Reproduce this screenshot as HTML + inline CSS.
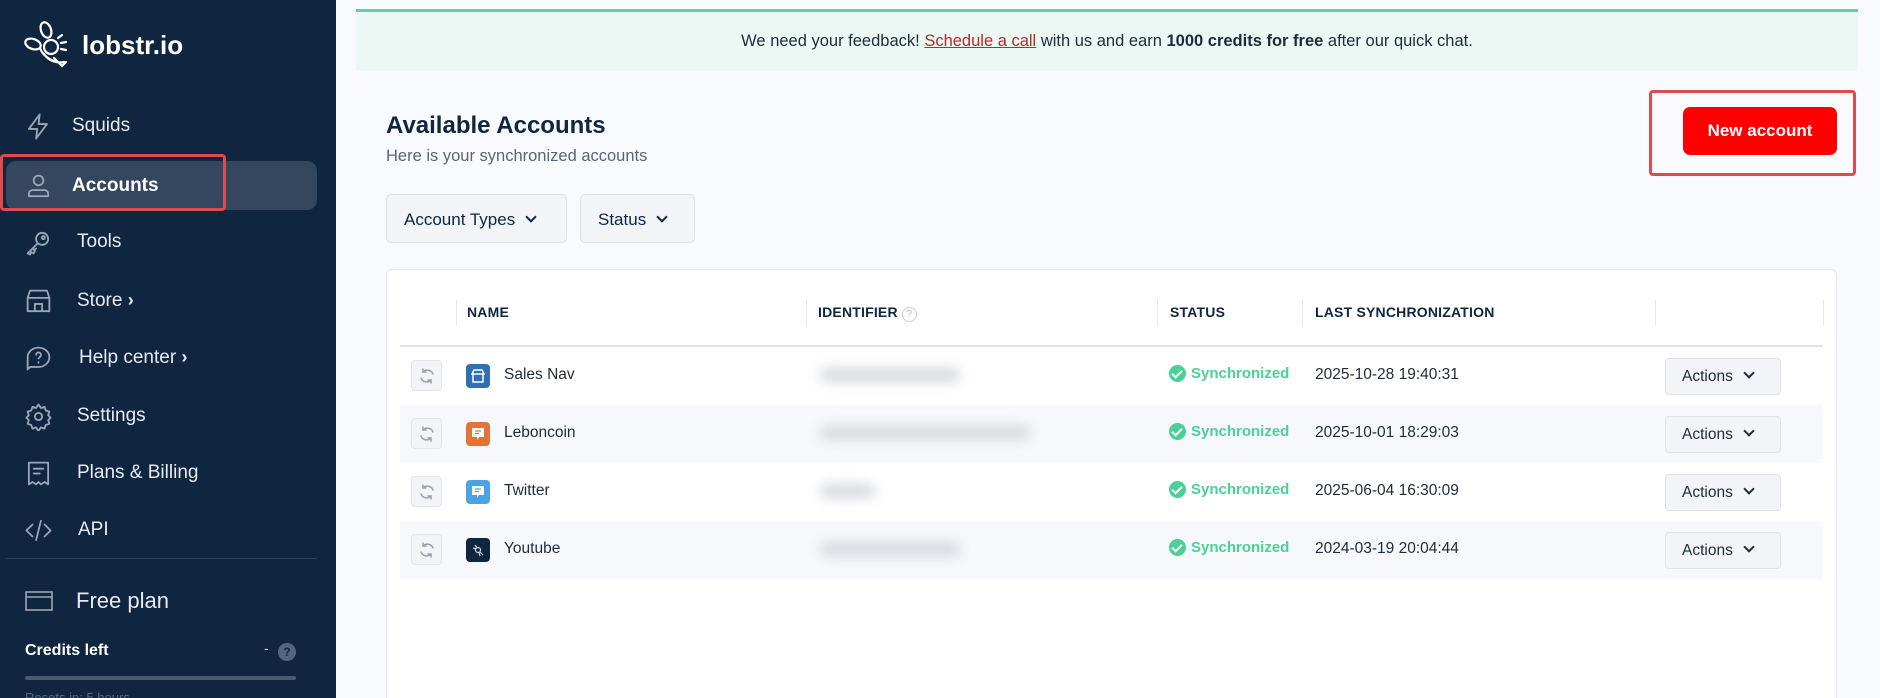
<!DOCTYPE html>
<html style="width:1880px;height:698px;overflow:hidden"><head><meta charset="utf-8"><style>
*{box-sizing:border-box;margin:0;padding:0}
body{width:1880px;height:698px;overflow:hidden;background:#f9fafd;font-family:"Liberation Sans",sans-serif;position:relative;color:#0f2540}
.abs{position:absolute}
#sb{left:0;top:0;width:336px;height:698px;background:#0f2540}
.nav{position:absolute;left:0;height:40px;display:flex;align-items:center;color:#e6ebf2;font-size:19px}
.nav svg{position:absolute;left:24px;width:29px;height:29px;fill:none;stroke:#9aa6b6;stroke-width:1.5;stroke-linecap:round;stroke-linejoin:round}
.nav span{position:absolute;white-space:nowrap}
.th{position:absolute;top:304px;font-size:14px;font-weight:bold;color:#0f2540;letter-spacing:.2px}
.sep{position:absolute;top:300px;width:1px;height:26px;background:#e3e6ea}
.row{position:absolute;left:400px;width:1423px;height:58px}
.sync{position:absolute;left:11px;top:13px;width:31px;height:31px;border:1px solid #e2e5ea;border-radius:4px;background:#f3f4f7}
.sync svg{position:absolute;left:6px;top:6px}
.ic{position:absolute;left:66px;top:17px;width:24px;height:24px;border-radius:4px}
.ic svg{position:absolute;left:5px;top:5px}
.nm{position:absolute;left:104px;top:19px;font-size:15.5px;color:#1e2b3a}
.blur{position:absolute;left:420px;top:21px;height:14px;background:#d5d8de;filter:blur(6px);border-radius:7px}
.st{position:absolute;left:769px;top:18px;font-size:15px;color:#4bd197;font-weight:bold;display:flex;align-items:center;gap:5px}
.st i{display:inline-block;width:17px;height:17px;border-radius:50%;background:#4bd197;position:relative}
.st i:after{content:"";position:absolute;left:5px;top:3px;width:4px;height:8px;border:solid #fff;border-width:0 2px 2px 0;transform:rotate(45deg)}
.dt{position:absolute;left:915px;top:19px;font-size:15.5px;color:#1e2b3a}
.act{position:absolute;left:1265px;top:11px;width:116px;height:37px;border:1px solid #e0e3e8;border-radius:4px;background:#f3f4f7;font-size:15.5px;color:#1e2b3a;padding:9px 0 0 16px}
.chev{display:inline-block;width:8px;height:8px;border:solid #1e2b3a;border-width:0 2px 2px 0;transform:rotate(45deg);margin-left:12px;position:relative;top:-4px}
</style></head><body>
<svg width="0" height="0" style="position:absolute"><defs><g id="sy" fill="none" stroke="#9aa0aa" stroke-width="1.5" stroke-linecap="round"><path d="M15 7a6 6 0 00-10-2M3 11a6 6 0 0010 2"/><path d="M5 2v3h3M13 16v-3h-3"/></g></defs></svg>
<div id="sb" class="abs">
 <svg class="abs" style="left:24px;top:20px" width="48" height="50" viewBox="0 0 48 50" fill="none" stroke="#fff" stroke-width="2.2" stroke-linecap="round"><ellipse cx="22" cy="10" rx="5" ry="8" transform="rotate(-20 22 10)"/><ellipse cx="9" cy="24" rx="8" ry="5" transform="rotate(20 9 24)"/><circle cx="27" cy="27" r="7"/><path d="M34 18l4-3M37 23l5-1M37 29l5 1M20 34c4 6 12 10 20 8M16 28c3 8 10 12 17 14"/><path d="M30 38l8 8 4-4"/></svg>
 <div class="abs" style="left:82px;top:30px;color:#fff;font-size:26px;font-weight:bold">lobstr.io</div>
 <div class="abs" style="left:6px;top:161px;width:311px;height:49px;background:#34475e;border-radius:10px"></div>
 <div class="abs" style="left:0;top:154px;width:226px;height:57px;border:3px solid #e0494d;border-radius:4px"></div>
 <div class="nav" style="top:106px"><svg viewBox="0 0 24 24"><path d="M13 2L4 14h7l-1 8 9-12h-7z"/></svg><span style="left:72px">Squids</span></div>
 <div class="nav" style="top:166px"><svg viewBox="0 0 24 24"><circle cx="12" cy="7" r="4"/><path d="M4 20v-2a3 3 0 013-3h10a3 3 0 013 3v2z"/></svg><span style="left:72px;color:#fff;font-weight:bold">Accounts</span></div>
 <div class="nav" style="top:222px"><svg viewBox="0 0 24 24"><circle cx="15" cy="9" r="5"/><circle cx="16" cy="8" r="1.3"/><path d="M11 13l-8 8 2 1 1-2 2 1 1-2-1-1 2-1"/></svg><span style="left:77px">Tools</span></div>
 <div class="nav" style="top:281px"><svg viewBox="0 0 24 24"><path d="M3 9l2-6h14l2 6v11H3zM3 9h18M9 20v-6h6v6"/></svg><span style="left:77px">Store <b style="font-size:18px">›</b></span></div>
 <div class="nav" style="top:338px"><svg viewBox="0 0 24 24"><path d="M12 3a9 8 0 110 16H5l-2 2V11a9 8 0 019-8z"/><path d="M10 9a2 2 0 114 0c0 2-2 2-2 3M12 15v.5"/></svg><span style="left:79px">Help center <b style="font-size:18px">›</b></span></div>
 <div class="nav" style="top:396px"><svg viewBox="0 0 24 24"><circle cx="12" cy="12" r="3"/><path d="M12 2l2 3 3-1 1 3 3 1-1 3 2 2-2 2 1 3-3 1-1 3-3-1-2 3-2-3-3 1-1-3-3-1 1-3-2-2 2-2-1-3 3-1 1-3 3 1z"/></svg><span style="left:77px">Settings</span></div>
 <div class="nav" style="top:453px"><svg viewBox="0 0 24 24"><path d="M4 3h16v18l-3-2-3 2-2-2-2 2-3-2-3 2zM8 8h8M8 12h5"/></svg><span style="left:77px">Plans &amp; Billing</span></div>
 <div class="nav" style="top:510px"><svg viewBox="0 0 24 24"><path d="M7 7l-5 5 5 5M17 7l5 5-5 5M14 4l-4 16"/></svg><span style="left:78px">API</span></div>
 <div class="abs" style="left:6px;top:558px;width:311px;height:1px;background:#2a3f58"></div>
 <svg class="abs" style="left:25px;top:590px" width="28" height="22" viewBox="0 0 28 22" fill="none" stroke="#9aa6b6" stroke-width="1.6"><rect x="1" y="2" width="26" height="18"/><path d="M1 7h26"/></svg>
 <div class="abs" style="left:76px;top:588px;color:#e6ebf2;font-size:22px">Free plan</div>
 <div class="abs" style="left:25px;top:642px;color:#fff;font-size:16px;font-weight:bold">Credits left</div>
 <div class="abs" style="left:264px;top:640px;color:#ccc;font-size:14px">-</div>
 <div class="abs" style="left:278px;top:643px;width:18px;height:18px;border-radius:50%;background:#53667e;color:#0f2540;font-size:12px;font-weight:bold;text-align:center;line-height:18px">?</div>
 <div class="abs" style="left:25px;top:676px;width:271px;height:4px;border-radius:2px;background:#4a5b70"></div>
 <div class="abs" style="left:25px;top:690px;color:#5b6b80;font-size:13px">Resets in: 5 hours</div>
</div>

<div class="abs" style="left:356px;top:9px;width:1502px;height:62px;background:#ebf8f3;border-top:3px solid #5dd3a0"></div>
<div class="abs" style="left:356px;top:32px;width:1502px;text-align:center;font-size:16.5px;color:#1e2b3a">We need your feedback! <span style="color:#b32b2b;text-decoration:underline">Schedule a call</span> with us and earn <b>1000 credits for free</b> after our quick chat.</div>

<div class="abs" style="left:386px;top:112px;font-size:24px;font-weight:bold;color:#0f2540">Available Accounts</div>
<div class="abs" style="left:386px;top:147px;font-size:16.5px;color:#5b6575">Here is your synchronized accounts</div>
<div class="abs" style="left:386px;top:194px;width:181px;height:49px;border:1px solid #dde0e6;border-radius:5px;background:#f3f4f7;font-size:17px;padding:15px 0 0 17px;color:#0f2540">Account Types<span class="chev" style="border-color:#0f2540"></span></div>
<div class="abs" style="left:580px;top:194px;width:115px;height:49px;border:1px solid #dde0e6;border-radius:5px;background:#f3f4f7;font-size:17px;padding:15px 0 0 17px;color:#0f2540">Status<span class="chev" style="border-color:#0f2540"></span></div>

<div class="abs" style="left:1649px;top:90px;width:207px;height:86px;border:3px solid #e0494d;border-radius:4px"></div>
<div class="abs" style="left:1683px;top:107px;width:154px;height:48px;background:#ff0000;border-radius:7px;color:#fff;font-weight:bold;font-size:17px;text-align:center;line-height:48px">New account</div>

<div class="abs" style="left:386px;top:269px;width:1451px;height:440px;background:#fff;border:1px solid #e6e8ec;border-radius:6px"></div>
<div class="sep" style="left:456px"></div><div class="sep" style="left:806px"></div><div class="sep" style="left:1157px"></div><div class="sep" style="left:1302px"></div><div class="sep" style="left:1655px"></div><div class="sep" style="left:1823px"></div>
<div class="th" style="left:467px">NAME</div>
<div class="th" style="left:818px">IDENTIFIER <span style="display:inline-block;width:15px;height:15px;border:1px solid #ccc;border-radius:50%;font-size:10px;color:#bbb;text-align:center;line-height:13px;font-weight:normal">?</span></div>
<div class="th" style="left:1170px">STATUS</div>
<div class="th" style="left:1315px">LAST SYNCHRONIZATION</div>
<div class="abs" style="left:400px;top:345px;width:1423px;height:2px;background:#e1e3e6"></div>

<div class="row" style="top:347px"><div class="sync"><svg width="18" height="18"><use href="#sy"/></svg></div><div class="ic" style="background:#2f6fb3"><svg width="14" height="14" viewBox="0 0 14 14" fill="none" stroke="#fff" stroke-width="1.5"><path d="M1 5l2-4h8l2 4zM2 5v8h10V5"/></svg></div><div class="nm">Sales Nav</div><div class="blur" style="width:140px"></div><div class="st"><i></i>Synchronized</div><div class="dt">2025-10-28 19:40:31</div><div class="act">Actions<span class="chev"></span></div></div>
<div class="row" style="top:405px;background:#f7f8fb"><div class="sync"><svg width="18" height="18"><use href="#sy"/></svg></div><div class="ic" style="background:#e4733a"><svg width="14" height="14" viewBox="0 0 14 14"><path d="M1 1h12v9H8l-2 3v-3H1z" fill="#fff"/><path d="M4 4h6M4 6.5h4" stroke="#e4733a" stroke-width="1.2"/></svg></div><div class="nm">Leboncoin</div><div class="blur" style="width:210px"></div><div class="st"><i></i>Synchronized</div><div class="dt">2025-10-01 18:29:03</div><div class="act">Actions<span class="chev"></span></div></div>
<div class="row" style="top:463px"><div class="sync"><svg width="18" height="18"><use href="#sy"/></svg></div><div class="ic" style="background:#4ba3e3"><svg width="14" height="14" viewBox="0 0 14 14"><path d="M1 1h12v9H8l-2 3v-3H1z" fill="#fff"/><path d="M4 4h6M4 6.5h4" stroke="#4ba3e3" stroke-width="1.2"/></svg></div><div class="nm">Twitter</div><div class="blur" style="width:55px"></div><div class="st"><i></i>Synchronized</div><div class="dt">2025-06-04 16:30:09</div><div class="act">Actions<span class="chev"></span></div></div>
<div class="row" style="top:521px;background:#f7f8fb"><div class="sync"><svg width="18" height="18"><use href="#sy"/></svg></div><div class="ic" style="background:#0f2540"><svg width="14" height="14" viewBox="0 0 14 14" fill="none" stroke="#cfd8e3" stroke-width="1.2"><circle cx="7" cy="7" r="2.5"/><path d="M4 2l2 3M2 5l3 1M9 9l3 3M8 10l1 3"/></svg></div><div class="nm">Youtube</div><div class="blur" style="width:140px"></div><div class="st"><i></i>Synchronized</div><div class="dt">2024-03-19 20:04:44</div><div class="act">Actions<span class="chev"></span></div></div>
</body></html>
